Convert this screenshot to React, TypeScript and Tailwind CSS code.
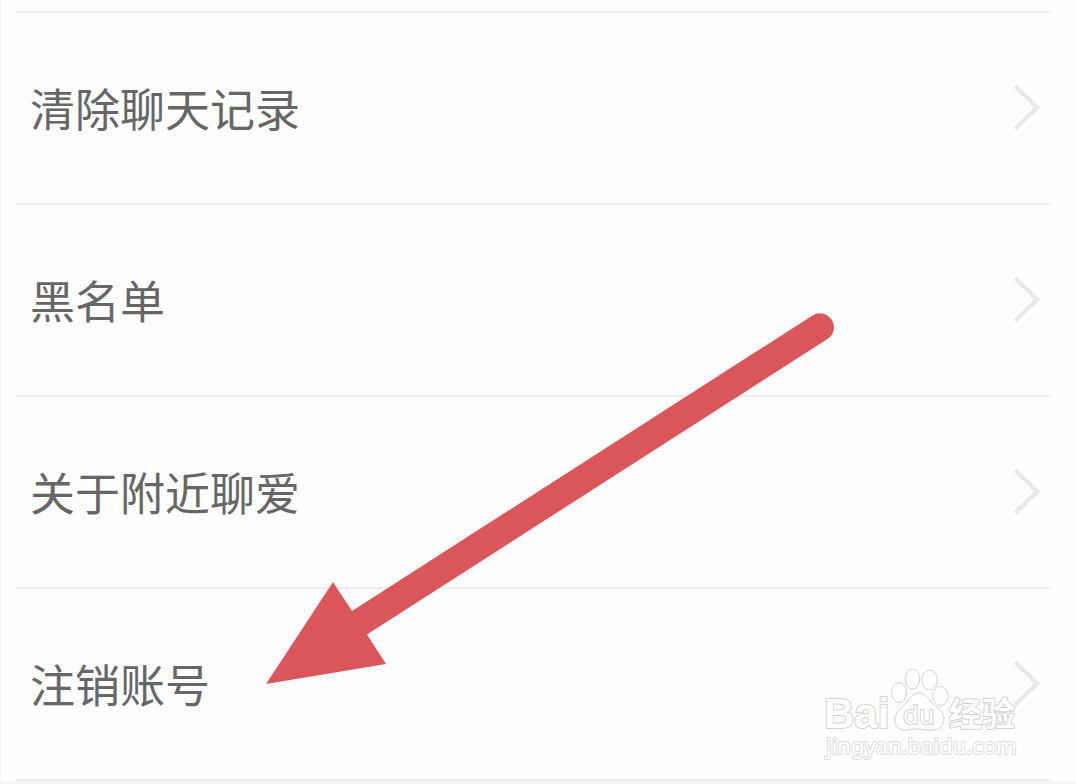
const items = ["清除聊天记录", "黑名单", "关于附近聊爱", "注销账号"];

function Chevron() {
  return (
    <svg className="h-12 w-7 shrink-0" viewBox="0 0 28 48" fill="none" aria-hidden="true">
      <path d="M2 2 24 23.500 2 45" stroke="#e9e9e9" strokeWidth="4.500" />
    </svg>
  );
}

function Arrow() {
  return (
    <svg
      className="pointer-events-none absolute top-[310px] left-[263px] h-[376px] w-[572px]"
      viewBox="264 310 572 376"
      aria-hidden="true"
    >
      <path
        d="M266 684 333 582 352 611 812.500 315.500A13.800 13.800 0 0 1 827.500 339L367 634.500 386 664Z"
        fill="#db565b"
      />
    </svg>
  );
}

function Watermark() {
  return (
    <div className="pointer-events-none absolute right-[56px] bottom-[20px] h-[100px] w-[200px]">
      <svg
        className="h-full w-full overflow-visible"
        viewBox="820 664 200 100"
        fill="#ffffff"
        stroke="#d2d2d2"
        strokeWidth="1"
        strokeLinejoin="round"
      >
        <g strokeWidth="2" paintOrder="stroke" fontWeight="700">
          <text x="824" y="728" fontSize="42" fontFamily="Liberation Sans, sans-serif">
            Bai
          </text>
          <text x="949" y="726" fontSize="33" fontFamily="Noto Sans CJK SC, sans-serif">
            经验
          </text>
        </g>
        <ellipse cx="899" cy="692.500" rx="7.500" ry="10" />
        <ellipse cx="912.500" cy="679" rx="7.200" ry="10" />
        <ellipse cx="929.500" cy="680" rx="7.800" ry="9.800" />
        <ellipse cx="940.500" cy="696" rx="7.800" ry="9.500" />
        <path d="M919 693C913 693 910 698 907 702C902 708 895 711 895 720C895 727 900 731 907 730C912 729 915 729 919 729C924 729 929 731 934 730C941 729 944 725 944 718C943 710 936 707 931 702C928 698 925 693 919 693Z" />
        <text
          x="903"
          y="724"
          fontSize="25"
          fontFamily="DejaVu Sans, sans-serif"
          strokeWidth="2"
          paintOrder="stroke"
        >
          du
        </text>
        <text
          x="826"
          y="754"
          fontSize="22"
          fontFamily="Noto Sans, sans-serif"
          strokeWidth="2"
          stroke="#dcdcdc"
          paintOrder="stroke"
        >
          jingyan.baidu.com
        </text>
      </svg>
    </div>
  );
}

export default function App() {
  return (
    <main className="relative border-l border-[#f5f5f5] bg-[#fefefe] pt-[11px] font-['Noto_Sans_CJK_SC',sans-serif]">
      <ul className="mr-[26px] ml-[15px] border-t-2 border-[#eeeeee]">
        {items.map((label) => (
          <li key={label} className="border-b-2 border-[#eeeeee]">
            <button
              type="button"
              className="flex h-[190px] w-full items-center justify-between pr-[9px] pl-[14px] text-left text-[45px] leading-[64px] text-[#666666]"
            >
              <span>{label}</span>
              <Chevron />
            </button>
          </li>
        ))}
      </ul>
      <div className="h-[3px] bg-[#f6f6f6]" />
      <Arrow />
      <Watermark />
    </main>
  );
}
